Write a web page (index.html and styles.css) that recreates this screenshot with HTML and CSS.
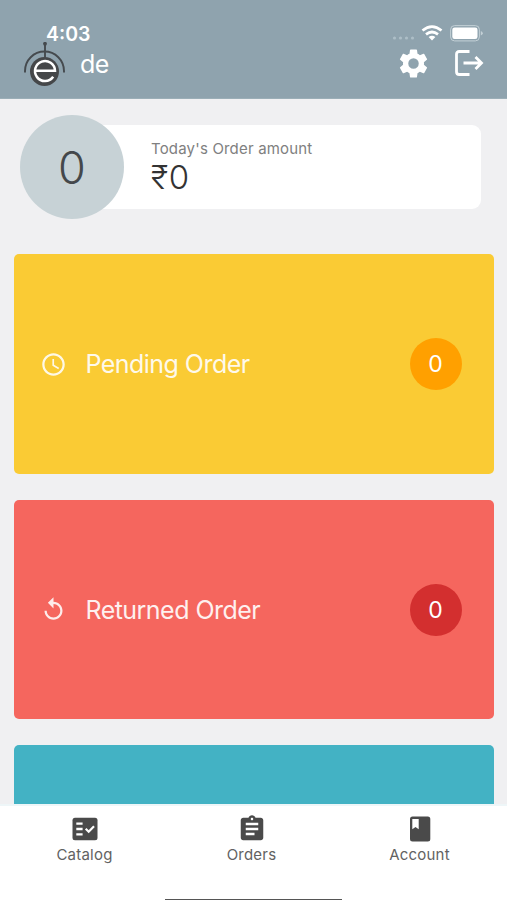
FILE: index.html
```html
<!DOCTYPE html>
<html lang="en">
<head>
<meta charset="utf-8">
<title>Orders dashboard</title>
<link rel="stylesheet" href="styles.css">
</head>
<body>
<div class="app">
  <header class="header">
    <div class="status">
      <span class="time">4:03</span>
      <svg class="signal" viewBox="0 0 24 4"><g fill="#adbec7"><circle cx="2.500" cy="2" r="1.600"/><circle cx="8.500" cy="2" r="1.600"/><circle cx="14.500" cy="2" r="1.600"/><circle cx="20.500" cy="2" r="1.600"/></g></svg>
      <svg class="wifi" viewBox="0 0 22 16"><g fill="none" stroke="#fff" stroke-width="2.700"><path d="M1.500 5.500Q11-2.300 20.500 5.500"/><path d="M5 9.400Q11 4.600 17 9.400"/></g><path d="M7.600 12.100Q11 9.300 14.400 12.100L11 15.500Z" fill="#fff"/></svg>
      <svg class="battery" viewBox="0 0 33 17"><rect x=".6" y=".6" width="28.800" height="15.300" rx="4" fill="none" stroke="#c3d0d6" stroke-width="1"/><rect x="2.300" y="2.500" width="25.200" height="11.500" rx="2.300" fill="#fff"/><path d="M30.800 6q2 .8 2 2.300t-2 2.300z" fill="#c3d0d6"/></svg>
    </div>
    <div class="bar">
      <svg class="logo" viewBox="0 0 44 46"><circle cx="21.500" cy="29.500" r="14.500" fill="#454749"/><g fill="none" stroke="#454a4e" stroke-width="1.900"><path d="M2 30.500V29a19.500 19.500 0 0 1 39 0v1.500"/><path d="M22 2v15"/></g><circle cx="22" cy="1.800" r="1.900" fill="#454a4e"/><path d="M12 28.800H32A10 10 0 1 0 30.200 34.800" fill="none" stroke="#fff" stroke-width="2.500"/></svg>
      <h1 class="title">de</h1>
      <svg class="gear" viewBox="0 0 24 24" fill="#fff"><path d="M19.140 12.940c.04-.3.060-.61.060-.94 0-.32-.02-.64-.07-.94l2.030-1.580a.49.49 0 0 0 .12-.61l-1.920-3.320a.488.488 0 0 0-.59-.22l-2.390.96c-.5-.38-1.030-.7-1.620-.94l-.36-2.540a.484.484 0 0 0-.48-.41h-3.840c-.24 0-.43.17-.47.41l-.36 2.540c-.59.24-1.130.57-1.620.94l-2.390-.96c-.22-.08-.47 0-.59.22L2.740 8.870c-.12.21-.08.47.12.61l2.030 1.580c-.05.3-.09.63-.09.94s.02.64.07.94l-2.030 1.580a.49.49 0 0 0-.12.61l1.920 3.320c.12.22.37.29.59.22l2.390-.96c.5.38 1.030.7 1.620.94l.36 2.540c.05.24.24.41.48.41h3.840c.24 0 .44-.17.47-.41l.36-2.540c.59-.24 1.130-.56 1.620-.94l2.390.96c.22.08.47 0 .59-.22l1.920-3.320c.12-.22.07-.47-.12-.61zM12 15.600A3.600 3.600 0 1 1 12 8.400a3.600 3.600 0 0 1 0 7.200z"/></svg>
      <svg class="logout" viewBox="0 0 29 26" fill="none" stroke="#fff" stroke-width="2.800"><path d="M14.500 1.500H4.300Q1.500 1.500 1.500 4.300V21.700Q1.500 24.500 4.300 24.500H14.500"/><path d="M8.500 13H26M20.500 7l6 6-6 6"/></svg>
    </div>
  </header>
  <main class="content">
    <section class="summary">
      <div class="count">0</div>
      <div class="amount-card">
        <div class="amount-label">Today's Order amount</div>
        <div class="amount">₹0</div>
      </div>
    </section>
    <section class="tile pending">
      <svg class="tile-icon" viewBox="0 0 24 24"><path d="M11.990 2C6.470 2 2 6.480 2 12s4.470 10 9.990 10C17.520 22 22 17.520 22 12S17.520 2 11.990 2zM12 20c-4.420 0-8-3.580-8-8s3.580-8 8-8 8 3.580 8 8-3.580 8-8 8zm.5-13H11v6l5.250 3.150.75-1.230-4.500-2.670z"/></svg>
      <span class="tile-name">Pending Order</span><span class="badge">0</span>
    </section>
    <section class="tile returned">
      <svg class="tile-icon" viewBox="0 0 24 24"><path d="M12 5V1L7 6l5 5V7c3.310 0 6 2.690 6 6s-2.690 6-6 6-6-2.690-6-6H4c0 4.420 3.580 8 8 8s8-3.580 8-8-3.580-8-8-8z"/></svg>
      <span class="tile-name">Returned Order</span><span class="badge">0</span>
    </section>
    <section class="tile third"></section>
  </main>
  <nav class="tabs">
    <a class="tab"><svg class="tab-icon" viewBox="0 0 30 30"><rect x="2.500" y="3.700" width="25" height="22.600" rx="2.500"/><path d="M6.300 9.700h6.300M6.300 15h6.300M6.300 20.300h6.300" stroke="#fff" stroke-width="2.300"/><path d="M15.700 14.800l3 3 5.300-5.500" fill="none" stroke="#fff" stroke-width="2.200"/></svg><span>Catalog</span></a>
    <a class="tab"><svg class="tab-icon" viewBox="0 0 24 24"><path d="M19 3h-4.180C14.400 1.840 13.300 1 12 1s-2.400.84-2.820 2H5c-1.100 0-2 .9-2 2v14c0 1.100.9 2 2 2h14c1.100 0 2-.9 2-2V5c0-1.100-.9-2-2-2zm-7 0c.55 0 1 .45 1 1s-.45 1-1 1-1-.45-1-1 .45-1 1-1zm2 14H7v-2h7v2zm3-4H7v-2h10v2zm0-4H7V7h10v2z"/></svg><span>Orders</span></a>
    <a class="tab"><svg class="tab-icon" viewBox="0 0 30 30"><rect x="5" y="2.500" width="20.300" height="25" rx="2.500"/><path d="M7.300 5h6.400v10.200l-3.200-2.100-3.200 2.100z" fill="#fff"/></svg><span>Account</span></a>
    <div class="home"></div>
  </nav>
</div>
</body>
</html>
```
FILE: styles.css
```css
* { box-sizing: border-box; }
body { margin: 0; background: #f0f0f2; font-family: Inter, "Liberation Sans", sans-serif; overflow: hidden; }
svg { display: block; flex: none; }
.app { height: 900px; display: flex; flex-direction: column; overflow: hidden; }

.header { height: 99px; flex: none; background: #8fa3ae; color: #fff; border-bottom: 1px solid #9baeb7; }
.status { height: 42px; padding: 25px 24px 0 46px; display: flex; align-items: center; }
.time { font-size: 19.500px; font-weight: 600; line-height: 18px; margin-right: auto; }
.signal { width: 24px; height: 4px; margin: 9px 5px 0 0; }
.wifi { width: 22px; height: 16px; margin: 0 7px 1px 0; }
.battery { width: 33px; height: 17px; margin-bottom: 1px; }
.bar { height: 45px; padding: 0 23px; display: flex; align-items: center; }
.logo { width: 44px; height: 46px; }
.title { margin: 0 auto 2px 13px; font-size: 25px; font-weight: 400; line-height: 42px; letter-spacing: -.6px; }
.gear { width: 35px; height: 35px; margin: 0 24px 3px 0; }
.logout { width: 29px; height: 26px; margin-bottom: 3px; }

.content { flex: 1; min-height: 0; padding: 16px 13px 0 14px; display: flex; flex-direction: column; gap: 26px; overflow: hidden; }
.summary { height: 113px; flex: none; padding: 0 13px 9px 6px; display: flex; align-items: center; }
.count { width: 104px; height: 104px; flex: none; border-radius: 50%; background: #c7d2d6; color: #44484b; display: flex; align-items: center; justify-content: center; font-size: 45px; font-weight: 300; z-index: 1; }
.amount-card { flex: 1; height: 84px; margin-left: -52px; padding: 14px 0 0 79px; background: #fff; border-radius: 9px; }
.amount-label { font-size: 15px; line-height: 19px; letter-spacing: .18px; color: #808080; white-space: nowrap; }
.amount { font-size: 33px; line-height: 38px; letter-spacing: .5px; font-weight: 300; color: #333; }
.tile { height: 219.500px; flex: none; border-radius: 5px; padding: 1px 32.500px 0 25.500px; display: flex; align-items: center; color: #fff; }
.tile-icon { width: 27px; height: 27px; fill: #fff; opacity: .88; }
.tile-name { margin: 0 auto 0 19px; font-size: 25px; line-height: 30px; letter-spacing: -.54px; opacity: .9; white-space: nowrap; }
.badge { width: 52px; height: 52px; border-radius: 50%; display: flex; align-items: center; justify-content: center; font-size: 23px; }
.pending { background: #facb34; }
.pending .badge { background: #ffa000; }
.returned { background: #f5665e; }
.returned .badge { background: #d32f2f; }
.third { background: #43b2c4; }

.tabs { position: relative; height: 96px; flex: none; background: #fff; border-top: 2px solid #eef6f8; display: grid; grid-template-columns: 169px 165px 171px; }
.tab { display: flex; flex-direction: column; align-items: center; padding-top: 8px; font-size: 15px; line-height: 21px; letter-spacing: .22px; color: #626262; }
.tab-icon { width: 30px; height: 30px; fill: #4a4a4a; }
.home { position: absolute; left: 165px; bottom: 0; width: 177px; height: 1px; background: #555; }
```
